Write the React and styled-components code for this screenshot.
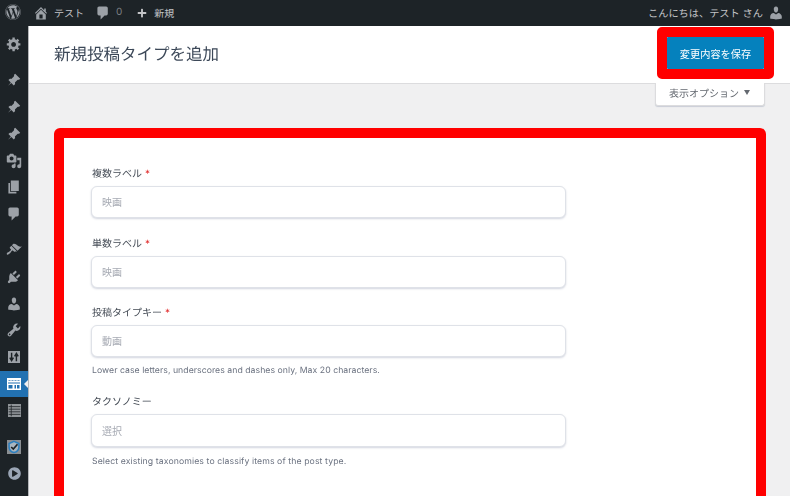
import React from 'react';
import styled, { createGlobalStyle } from 'styled-components';
import { FaWordpress, FaPlus, FaPlayCircle } from 'react-icons/fa';

const FONT = `Inter, "Noto Sans CJK JP", sans-serif`;

const Global = createGlobalStyle`
  html, body { margin: 0; padding: 0; height: 100%; overflow: hidden; background: #f0f0f1; }
  * { box-sizing: border-box; }
  body { font-family: ${FONT}; text-rendering: geometricPrecision; }
`;

// admin menu glyphs, 20 unit grid
const GLYPHS = {
  home: 'M16 8.5l1.53 1.53-1.06 1.06L10 4.62l-6.47 6.47-1.06-1.06L10 2.5l4 4v-2h2v4zm-6-2.46l6 5.99V18H4v-5.97zM12 17v-5H8v5h4z',
  comment: 'M5 2h9c1.1 0 2 .9 2 2v7c0 1.1-.9 2-2 2h-2l-5 5v-5H5c-1.1 0-2-.9-2-2V4c0-1.1.9-2 2-2z',
  user: 'M10 9.25c-2.27 0-2.73-3.44-2.73-3.44C7 4.02 7.82 2 9.97 2c2.16 0 2.98 2.02 2.71 3.81 0 0-.41 3.44-2.68 3.44zm0 2.57L12.72 10c2.39 0 4.52 2.33 4.52 4.53v2.49s-3.65 1.13-7.24 1.13c-3.65 0-7.24-1.13-7.24-1.13v-2.49c0-2.25 1.94-4.48 4.47-4.48z',
  cog: 'M18 12h-2.18c-.17.7-.44 1.35-.81 1.93l1.54 1.54-2.1 2.1-1.54-1.54c-.58.36-1.23.63-1.91.79V19H8v-2.18c-.68-.16-1.33-.43-1.91-.79l-1.54 1.54-2.12-2.12 1.54-1.54c-.36-.58-.63-1.23-.79-1.91H1V9.03h2.17c.16-.7.44-1.35.8-1.94L2.43 5.55l2.1-2.1 1.54 1.54c.58-.37 1.24-.64 1.93-.81V2h3v2.18c.68.16 1.33.43 1.91.79l1.54-1.54 2.12 2.12-1.54 1.54c.36.59.64 1.24.8 1.94H18V12zm-8.5 1.5c1.66 0 3-1.34 3-3s-1.34-3-3-3-3 1.34-3 3 1.34 3 3 3z',
  pin: 'M11.5 2.2l6.3 6.3-1.5 1.3c-.7-.3-1.4-.2-2 .2l-3.2 3.2c.4.7.4 1.4.1 2.1l-1.5 1.5-3-3-4.2 3.5 3.5-4.2-3-3 1.5-1.5c.7-.3 1.4-.3 2.1.1l3.2-3.2c.4-.6.5-1.3.2-2z',
  media: 'M13 11V4c0-.55-.45-1-1-1h-1.67L9 1H5L3.67 3H2c-.55 0-1 .45-1 1v7c0 .55.45 1 1 1h10c.55 0 1-.45 1-1zM7 4.5c1.38 0 2.5 1.12 2.5 2.5S8.38 9.5 7 9.5 4.5 8.38 4.5 7 5.62 4.5 7 4.5zM14 6h5v10.5c0 1.38-1.12 2.5-2.5 2.5S14 17.88 14 16.5s1.12-2.5 2.5-2.5c.17 0 .34.02.5.05V9h-3V6zm-4 8.05V13h2v3.5c0 1.38-1.12 2.5-2.5 2.5S7 17.88 7 16.5 8.12 14 9.5 14c.17 0 .34.02.5.05z',
  page: 'M6 15V2h10v13H6zm-1 1h8v2H3V5h2v11z',
  brush: 'M14.48 11.06L7.41 3.99l1.5-1.5c.5-.56 2.3-.47 3.51.32 1.21.8 1.43 1.28 2.91 2.1 1.18.64 2.45 1.26 4.45.85zm-.71.71L6.7 4.7 4.93 6.47c-.39.39-.39 1.02 0 1.41l1.06 1.06c.39.39.39 1.03 0 1.42-.6.6-1.43 1.11-2.21 1.69-.35.26-.7.53-1.01.84C1.43 13.23.4 14.84 1.19 15.63c.79.79 2.4-.24 3.74-1.58.31-.31.58-.66.84-1.01.58-.78 1.09-1.61 1.69-2.21.39-.39 1.02-.39 1.41 0l1.06 1.06c.39.39 1.02.39 1.41 0z',
  plug: 'M13.11 4.36L9.87 7.6 8 5.73l3.24-3.24c.35-.34 1.05-.2 1.56.32.52.51.66 1.21.31 1.55zm-8 1.77l.91-1.12 9.01 9.01-1.19.84c-.71.71-2.63 1.16-3.82 1.16H6.14L4.9 17.26c-.59.59-1.54.59-2.12 0-.59-.58-.59-1.53 0-2.12l1.24-1.24v-3.88c0-1.13.4-3.19 1.09-3.89zm7.26 3.97l3.24-3.24c.34-.35 1.04-.21 1.55.31.52.51.66 1.21.31 1.55l-3.24 3.25z',
  wrench: 'M16.68 9.77c-1.34 1.34-3.3 1.67-4.95.99l-5.41 6.52c-.99.99-2.59.99-3.58 0s-.99-2.59 0-3.57l6.52-5.42c-.68-1.65-.35-3.61.99-4.95 1.28-1.28 3.12-1.62 4.72-1.06l-2.89 2.89 2.82 2.82 2.86-2.87c.53 1.58.18 3.39-1.08 4.67zM3.81 16.21c.4.39 1.04.39 1.43 0 .4-.4.4-1.04 0-1.43-.39-.4-1.03-.4-1.43 0-.39.39-.39 1.03 0 1.43z',
};

const Page = styled.div`
  width: 790px;
  height: 496px;
  display: flex;
  flex-direction: column;
  overflow: hidden;
  will-change: opacity;
`;

const AdminBar = styled.div`
  height: 26px;
  flex: none;
  background: #1d2327;
  color: #c3c4c7;
  display: flex;
  align-items: center;
  font-size: 10px;
  padding: 0 6px 2px 5px;
`;

const BarItem = styled.div`
  display: flex;
  align-items: center;
  gap: ${p => p.$gap || 5}px;
  margin-left: ${p => p.$ml || 0}px;
  color: ${p => p.$dim ? '#7c7f82' : '#c3c4c7'};
  svg { color: #9ca1a7; flex: none; margin-top: 1px; }
`;

const BarRight = styled(BarItem)`
  margin-left: auto;
  font-size: 10.2px;
`;

const Body = styled.div`
  flex: 1;
  display: flex;
  min-height: 0;
`;

const Sidebar = styled.nav`
  width: 28px;
  flex: none;
  background: #1d2327;
  padding-top: 5px;
  display: flex;
  flex-direction: column;
`;

const MenuItem = styled.div`
  position: relative;
  height: 26.8px;
  flex: none;
  display: flex;
  align-items: center;
  justify-content: center;
  margin-top: ${p => p.$gap || 0}px;
  color: #9ca1a7;
  background: ${p => p.$active ? '#2271b1' : 'transparent'};
  ${p => p.$active && `
    color: #fff;
    &::after {
      content: '';
      position: absolute;
      right: 0;
      top: 50%;
      margin-top: -4px;
      border: 4px solid transparent;
      border-right-color: #f0f0f1;
    }
  `}
`;

const Main = styled.main`
  flex: 1;
  min-width: 0;
  border-left: 1px solid #b4b6b9;
  display: flex;
  flex-direction: column;
`;

const Header = styled.header`
  height: 58px;
  margin-bottom: -1px;
  flex: none;
  background: #fff;
  border-bottom: 1px solid #dcdcde;
  display: flex;
  align-items: center;
  justify-content: space-between;
  padding: 1px 16px 5px 25px;
`;

const Title = styled.h1`
  margin: 0;
  font-size: 16.5px;
  font-weight: 400;
  color: #3c4858;
`;

const SaveFrame = styled.div`
  width: 117px;
  height: 52px;
  border: 10px solid #ff0000;
  border-radius: 5px;
  align-self: flex-start;
`;

const SaveButton = styled.button`
  width: 100%;
  height: 100%;
  display: block;
  border: 0;
  border-radius: 1px;
  background: #0581bd;
  color: #fff;
  font-family: ${FONT};
  font-size: 10.2px;
  padding: 0;
`;

const ScreenRow = styled.div`
  display: flex;
  justify-content: flex-end;
  padding-right: 25px;
  flex: none;
`;

const ScreenTab = styled.div`
  width: 110px;
  height: 23px;
  padding: 0 1px 3px 0;
  background: #fff;
  border: 1px solid #dcdcde;
  border-top: 0;
  border-radius: 0 0 3px 3px;
  box-shadow: 0 1px 1px #c9cdd6;
  color: #646970;
  font-size: 10px;
  display: flex;
  align-items: center;
  justify-content: center;
  gap: 5px;
`;

const Caret = styled.span`
  width: 0;
  height: 0;
  border-left: 3.5px solid transparent;
  border-right: 3.5px solid transparent;
  border-top: 5px solid #646970;
`;

const Card = styled.section`
  margin: 22px 24px 0 25px;
  flex: none;
  height: 500px;
  background: #fff;
  border: 10px solid #ff0000;
  border-radius: 6px;
  padding: 27px 0 0 27px;
`;

const Field = styled.div`
  width: 475px;
  margin-bottom: ${p => p.$mb || 0}px;
`;

const Label = styled.label`
  display: block;
  height: 16px;
  line-height: 18px;
  margin: 0 0 5px 1px;
  font-size: 10px;
  color: #434a54;
`;

const Req = styled.span`
  color: #e02424;
  margin-left: 3px;
`;

const Input = styled.input`
  display: block;
  width: 100%;
  height: ${p => p.$h || 32}px;
  border: 1px solid #dfe2e8;
  border-radius: 6px;
  box-shadow: 0 1px 2px rgba(80, 90, 130, 0.25);
  background: #fff;
  padding: 0 10px;
  font-family: ${FONT};
  font-size: 10px;
  outline: none;
  &::placeholder { color: #a6aab3; opacity: 1; }
`;

const Help = styled.p`
  margin: ${p => p.$mt || 7}px 0 0 1px;
  height: 13px;
  line-height: 15px;
  font-size: 8.7px;
  letter-spacing: ${p => p.$ls || 0.04}px;
  color: #6b7280;
`;

function Glyph({ name, size = 16 }) {
  return (
    <svg width={size} height={size} viewBox="0 0 20 20" fill="currentColor">
      <path d={GLYPHS[name]} />
    </svg>
  );
}

function PanelIcon() {
  return (
    <svg width="14" height="12" viewBox="0 0 14 12">
      <rect width="14" height="12" fill="#fff" />
      <path d="M1.5 2h2v1h-2zM4.5 2h2v1h-2zM7.5 2h2v1h-2zM10.5 2h2v1h-2z" fill="#6d9dc8" />
      <path d="M1 4.5h12v1H1zM1.5 7h4v3.5h-4zM7.5 7h1.5v3.5H7.5zM10 7h2.5v3.5H10z" fill="#2271b1" />
    </svg>
  );
}

function SlidersIcon() {
  return (
    <svg width="12" height="12" viewBox="0 0 20 20">
      <rect width="20" height="20" fill="#9ca1a7" />
      <path d="M6 3v12M3 11l3 5 3-5M14 17V5M11 9l3-5 3 5" stroke="#1d2327" strokeWidth="2.4" fill="none" />
    </svg>
  );
}

function ListIcon() {
  return (
    <svg width="13" height="13" viewBox="0 0 20 20">
      <rect width="20" height="20" fill="#8f9498" />
      <path d="M1 4h18M1 8h18M1 12h18M1 16h18M5 1v18" stroke="#1d2327" strokeWidth="1.2" fill="none" />
    </svg>
  );
}

function ShieldIcon() {
  return (
    <svg width="14" height="14" viewBox="0 0 20 20">
      <rect width="20" height="20" fill="#8b8f93" />
      <path d="M10 2l7 3v5c0 4-3 7-7 8-4-1-7-4-7-8V5z" fill="#aab6c0" stroke="#2b7fbf" strokeWidth="2.2" />
      <path d="M6 10l3 3 6-7" stroke="#1d2327" strokeWidth="2.4" fill="none" />
    </svg>
  );
}

function App() {
  return (
    <Page>
      <Global />
      <AdminBar>
        <FaWordpress size={16} color="#9ca1a7" />
        <BarItem $ml={12}><Glyph name="home" />テスト</BarItem>
        <BarItem $ml={11} $dim><Glyph name="comment" />0</BarItem>
        <BarItem $ml={15} $gap={7}><FaPlus size={10} color="#c3c4c7" />新規</BarItem>
        <BarRight>こんにちは、テスト さん<Glyph name="user" /></BarRight>
      </AdminBar>
      <Body>
        <Sidebar>
          <MenuItem><Glyph name="cog" /></MenuItem>
          <MenuItem $gap={9}><Glyph name="pin" /></MenuItem>
          <MenuItem><Glyph name="pin" /></MenuItem>
          <MenuItem><Glyph name="pin" /></MenuItem>
          <MenuItem><Glyph name="media" /></MenuItem>
          <MenuItem><Glyph name="page" /></MenuItem>
          <MenuItem><Glyph name="comment" /></MenuItem>
          <MenuItem $gap={9}><Glyph name="brush" /></MenuItem>
          <MenuItem><Glyph name="plug" /></MenuItem>
          <MenuItem><Glyph name="user" /></MenuItem>
          <MenuItem><Glyph name="wrench" /></MenuItem>
          <MenuItem><SlidersIcon /></MenuItem>
          <MenuItem $active><PanelIcon /></MenuItem>
          <MenuItem><ListIcon /></MenuItem>
          <MenuItem $gap={9.4}><ShieldIcon /></MenuItem>
          <MenuItem><FaPlayCircle size={13} color="#9aa5b5" /></MenuItem>
        </Sidebar>
        <Main>
          <Header>
            <Title>新規投稿タイプを追加</Title>
            <SaveFrame><SaveButton>変更内容を保存</SaveButton></SaveFrame>
          </Header>
          <ScreenRow>
            <ScreenTab>表示オプション<Caret /></ScreenTab>
          </ScreenRow>
          <Card>
            <Field $mb={17}>
              <Label>複数ラベル<Req>*</Req></Label>
              <Input placeholder="映画" />
            </Field>
            <Field $mb={16}>
              <Label>単数ラベル<Req>*</Req></Label>
              <Input placeholder="映画" />
            </Field>
            <Field $mb={16}>
              <Label>投稿タイプキー<Req>*</Req></Label>
              <Input placeholder="動画" />
              <Help>Lower case letters, underscores and dashes only, Max 20 characters.</Help>
            </Field>
            <Field>
              <Label>タクソノミー</Label>
              <Input $h={33} placeholder="選択" />
              <Help $mt={8} $ls={0.1}>Select existing taxonomies to classify items of the post type.</Help>
            </Field>
          </Card>
        </Main>
      </Body>
    </Page>
  );
}

export default App;
